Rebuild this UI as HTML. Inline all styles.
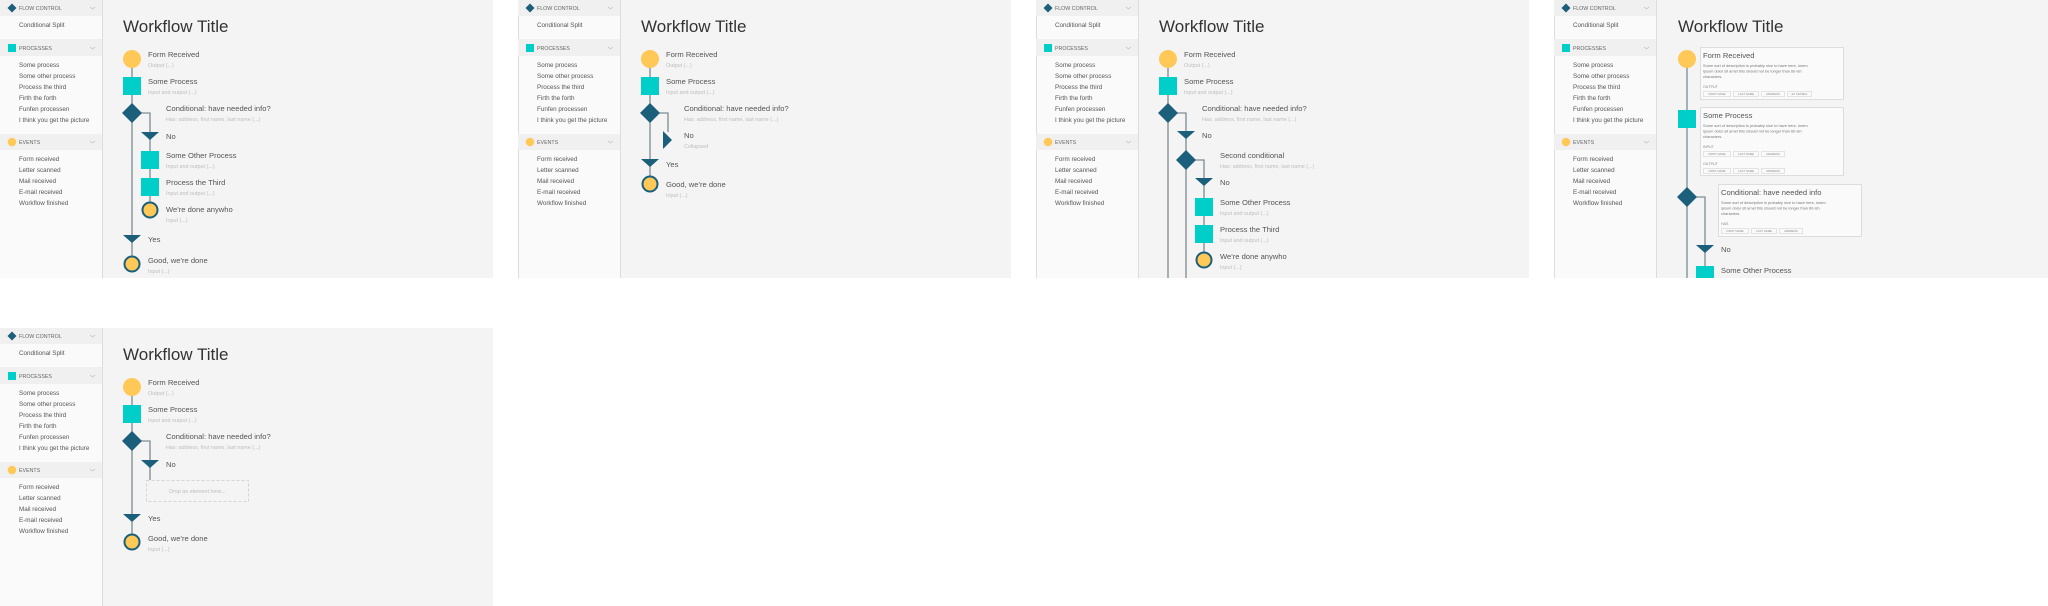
<!DOCTYPE html>
<html><head><meta charset="utf-8"><style>
html,body{margin:0;padding:0;background:#fff;width:2048px;height:606px;overflow:hidden}
svg{display:block;font-family:"Liberation Sans",sans-serif}
.hd{font-size:5.3px;fill:#666}
.it{font-size:6.3px;fill:#555}
.lb{font-size:7.6px;fill:#555}
.sb{font-size:5.4px;fill:#bdbdbd}
.tt{font-size:17px;fill:#333}
.ln{stroke:#7d8c91;stroke-width:1.3;fill:none}
.ds{font-size:3.9px;fill:#777}
.cap{font-size:3.6px;fill:#888}
.tg{font-size:2.8px;fill:#888}
.tr{fill:#fafafa;stroke:#ccc;stroke-width:0.5}
.cd{fill:#fafafa;stroke:#ddd;stroke-width:1}
</style></head><body>
<svg width="2048" height="606" viewBox="0 0 2048 606" xmlns="http://www.w3.org/2000/svg">
<defs><clipPath id="pc"><rect x="0" y="0" width="494" height="278"/></clipPath></defs>

<!-- ============ PANEL 1 ============ -->
<g transform="translate(0,0)" clip-path="url(#pc)">
<rect x="0" y="0" width="493" height="278" fill="#f4f4f4"/>
<rect x="0" y="0" width="102" height="278" fill="#fafafa"/><line x1="102.5" y1="0" x2="102.5" y2="278" stroke="#ddd"/>
<rect x="0" y="0" width="102" height="16" fill="#f0f0f0"/><rect x="0" y="39" width="102" height="17" fill="#f0f0f0"/><rect x="0" y="134" width="102" height="16" fill="#f0f0f0"/>
<polygon points="12,3.5 16.5,8 12,12.5 7.5,8" fill="#1c5f7a"/><rect x="8" y="44" width="8" height="8" fill="#00cec9"/><circle cx="12" cy="142" r="4.3" fill="#ffc857"/>
<polyline points="90,7 92.5,9 95,7" fill="none" stroke="#bbb" stroke-width="0.6"/><polyline points="90,47 92.5,49 95,47" fill="none" stroke="#bbb" stroke-width="0.6"/><polyline points="90,141 92.5,143 95,141" fill="none" stroke="#bbb" stroke-width="0.6"/>
<text class="hd" x="19" y="10">FLOW CONTROL</text><text class="it" x="19" y="27">Conditional Split</text>
<text class="hd" x="19" y="50">PROCESSES</text>
<text class="it" x="19" y="67">Some process</text><text class="it" x="19" y="78">Some other process</text><text class="it" x="19" y="89">Process the third</text><text class="it" x="19" y="100">Firth the forth</text><text class="it" x="19" y="111">Funfen processen</text><text class="it" x="19" y="122">I think you get the picture</text>
<text class="hd" x="19" y="144">EVENTS</text>
<text class="it" x="19" y="161">Form received</text><text class="it" x="19" y="172">Letter scanned</text><text class="it" x="19" y="183">Mail received</text><text class="it" x="19" y="194">E-mail received</text><text class="it" x="19" y="205">Workflow finished</text>
<text class="tt" x="123" y="32">Workflow Title</text>
<line class="ln" x1="132" y1="59" x2="132" y2="264"/><polyline class="ln" points="132,113 150,113 150,210"/>
<circle cx="132" cy="59" r="9" fill="#ffc857"/><text class="lb" x="148" y="57">Form Received</text><text class="sb" x="148" y="67">Output (...)</text>
<rect x="123" y="77" width="18" height="18" fill="#00cec9"/><text class="lb" x="148" y="84">Some Process</text><text class="sb" x="148" y="94">Input and output (...)</text>
<polygon points="132,103 142,113 132,123 122,113" fill="#1c5f7a"/><text class="lb" x="166" y="111">Conditional: have needed info?</text><text class="sb" x="166" y="121">Has: address, first name, last name (...)</text>
<polygon points="141,132 159,132 150,140" fill="#1c5f7a"/><text class="lb" x="166" y="139">No</text>
<rect x="141" y="151" width="18" height="18" fill="#00cec9"/><text class="lb" x="166" y="158">Some Other Process</text><text class="sb" x="166" y="168">Input and output (...)</text>
<rect x="141" y="178" width="18" height="18" fill="#00cec9"/><text class="lb" x="166" y="185">Process the Third</text><text class="sb" x="166" y="195">Input and output (...)</text>
<circle cx="150" cy="210" r="7.5" fill="#ffc857" stroke="#1c5f7a" stroke-width="2"/><text class="lb" x="166" y="212">We're done anywho</text><text class="sb" x="166" y="222">Input (...)</text>
<polygon points="123,235 141,235 132,243" fill="#1c5f7a"/><text class="lb" x="148" y="242">Yes</text>
<circle cx="132" cy="264" r="7.5" fill="#ffc857" stroke="#1c5f7a" stroke-width="2"/><text class="lb" x="148" y="263">Good, we're done</text><text class="sb" x="148" y="273">Input (...)</text>
</g>

<!-- ============ PANEL 2 ============ -->
<g transform="translate(518,0)" clip-path="url(#pc)">
<rect x="0" y="0" width="493" height="278" fill="#f4f4f4"/>
<rect x="0" y="0" width="102" height="278" fill="#fafafa"/><line x1="102.5" y1="0" x2="102.5" y2="278" stroke="#ddd"/><line x1="0.5" y1="0" x2="0.5" y2="278" stroke="#ddd"/>
<rect x="0" y="0" width="102" height="16" fill="#f0f0f0"/><rect x="0" y="39" width="102" height="17" fill="#f0f0f0"/><rect x="0" y="134" width="102" height="16" fill="#f0f0f0"/>
<polygon points="12,3.5 16.5,8 12,12.5 7.5,8" fill="#1c5f7a"/><rect x="8" y="44" width="8" height="8" fill="#00cec9"/><circle cx="12" cy="142" r="4.3" fill="#ffc857"/>
<polyline points="90,7 92.5,9 95,7" fill="none" stroke="#bbb" stroke-width="0.6"/><polyline points="90,47 92.5,49 95,47" fill="none" stroke="#bbb" stroke-width="0.6"/><polyline points="90,141 92.5,143 95,141" fill="none" stroke="#bbb" stroke-width="0.6"/>
<text class="hd" x="19" y="10">FLOW CONTROL</text><text class="it" x="19" y="27">Conditional Split</text>
<text class="hd" x="19" y="50">PROCESSES</text>
<text class="it" x="19" y="67">Some process</text><text class="it" x="19" y="78">Some other process</text><text class="it" x="19" y="89">Process the third</text><text class="it" x="19" y="100">Firth the forth</text><text class="it" x="19" y="111">Funfen processen</text><text class="it" x="19" y="122">I think you get the picture</text>
<text class="hd" x="19" y="144">EVENTS</text>
<text class="it" x="19" y="161">Form received</text><text class="it" x="19" y="172">Letter scanned</text><text class="it" x="19" y="183">Mail received</text><text class="it" x="19" y="194">E-mail received</text><text class="it" x="19" y="205">Workflow finished</text>
<text class="tt" x="123" y="32">Workflow Title</text>
<line class="ln" x1="132" y1="59" x2="132" y2="184"/><polyline class="ln" points="132,113 150,113 150,132"/>
<circle cx="132" cy="59" r="9" fill="#ffc857"/><text class="lb" x="148" y="57">Form Received</text><text class="sb" x="148" y="67">Output (...)</text>
<rect x="123" y="77" width="18" height="18" fill="#00cec9"/><text class="lb" x="148" y="84">Some Process</text><text class="sb" x="148" y="94">Input and output (...)</text>
<polygon points="132,103 142,113 132,123 122,113" fill="#1c5f7a"/><text class="lb" x="166" y="111">Conditional: have needed info?</text><text class="sb" x="166" y="121">Has: address, first name, last name (...)</text>
<polygon points="145,131 145,149 154,140" fill="#1c5f7a"/><text class="lb" x="166" y="138">No</text><text class="sb" x="166" y="148">Collapsed</text>
<polygon points="123,159 141,159 132,167" fill="#1c5f7a"/><text class="lb" x="148" y="167">Yes</text>
<circle cx="132" cy="184" r="7.5" fill="#ffc857" stroke="#1c5f7a" stroke-width="2"/><text class="lb" x="148" y="187">Good, we're done</text><text class="sb" x="148" y="197">Input (...)</text>
</g>

<!-- ============ PANEL 3 ============ -->
<g transform="translate(1036,0)" clip-path="url(#pc)">
<rect x="0" y="0" width="493" height="278" fill="#f4f4f4"/>
<rect x="0" y="0" width="102" height="278" fill="#fafafa"/><line x1="102.5" y1="0" x2="102.5" y2="278" stroke="#ddd"/><line x1="0.5" y1="0" x2="0.5" y2="278" stroke="#ddd"/>
<rect x="0" y="0" width="102" height="16" fill="#f0f0f0"/><rect x="0" y="39" width="102" height="17" fill="#f0f0f0"/><rect x="0" y="134" width="102" height="16" fill="#f0f0f0"/>
<polygon points="12,3.5 16.5,8 12,12.5 7.5,8" fill="#1c5f7a"/><rect x="8" y="44" width="8" height="8" fill="#00cec9"/><circle cx="12" cy="142" r="4.3" fill="#ffc857"/>
<polyline points="90,7 92.5,9 95,7" fill="none" stroke="#bbb" stroke-width="0.6"/><polyline points="90,47 92.5,49 95,47" fill="none" stroke="#bbb" stroke-width="0.6"/><polyline points="90,141 92.5,143 95,141" fill="none" stroke="#bbb" stroke-width="0.6"/>
<text class="hd" x="19" y="10">FLOW CONTROL</text><text class="it" x="19" y="27">Conditional Split</text>
<text class="hd" x="19" y="50">PROCESSES</text>
<text class="it" x="19" y="67">Some process</text><text class="it" x="19" y="78">Some other process</text><text class="it" x="19" y="89">Process the third</text><text class="it" x="19" y="100">Firth the forth</text><text class="it" x="19" y="111">Funfen processen</text><text class="it" x="19" y="122">I think you get the picture</text>
<text class="hd" x="19" y="144">EVENTS</text>
<text class="it" x="19" y="161">Form received</text><text class="it" x="19" y="172">Letter scanned</text><text class="it" x="19" y="183">Mail received</text><text class="it" x="19" y="194">E-mail received</text><text class="it" x="19" y="205">Workflow finished</text>
<text class="tt" x="123" y="32">Workflow Title</text>
<line class="ln" x1="132" y1="59" x2="132" y2="280"/><polyline class="ln" points="132,113 150,113 150,280"/><polyline class="ln" points="150,160 168,160 168,260"/>
<circle cx="132" cy="59" r="9" fill="#ffc857"/><text class="lb" x="148" y="57">Form Received</text><text class="sb" x="148" y="67">Output (...)</text>
<rect x="123" y="77" width="18" height="18" fill="#00cec9"/><text class="lb" x="148" y="84">Some Process</text><text class="sb" x="148" y="94">Input and output (...)</text>
<polygon points="132,103 142,113 132,123 122,113" fill="#1c5f7a"/><text class="lb" x="166" y="111">Conditional: have needed info?</text><text class="sb" x="166" y="121">Has: address, first name, last name (...)</text>
<polygon points="141,131 159,131 150,139" fill="#1c5f7a"/><text class="lb" x="166" y="138">No</text>
<polygon points="150,150 160,160 150,170 140,160" fill="#1c5f7a"/><text class="lb" x="184" y="158">Second conditional</text><text class="sb" x="184" y="168">Has: address, first name, last name (...)</text>
<polygon points="159,178 177,178 168,186" fill="#1c5f7a"/><text class="lb" x="184" y="185">No</text>
<rect x="159" y="198" width="18" height="18" fill="#00cec9"/><text class="lb" x="184" y="205">Some Other Process</text><text class="sb" x="184" y="215">Input and output (...)</text>
<rect x="159" y="225" width="18" height="18" fill="#00cec9"/><text class="lb" x="184" y="232">Process the Third</text><text class="sb" x="184" y="242">Input and output (...)</text>
<circle cx="168" cy="260" r="7.5" fill="#ffc857" stroke="#1c5f7a" stroke-width="2"/><text class="lb" x="184" y="259">We're done anywho</text><text class="sb" x="184" y="269">Input (...)</text>
</g>

<!-- ============ PANEL 4 ============ -->
<g transform="translate(1554,0)" clip-path="url(#pc)">
<rect x="0" y="0" width="494" height="278" fill="#f4f4f4"/>
<rect x="0" y="0" width="102" height="278" fill="#fafafa"/><line x1="102.5" y1="0" x2="102.5" y2="278" stroke="#ddd"/><line x1="0.5" y1="0" x2="0.5" y2="278" stroke="#ddd"/>
<rect x="0" y="0" width="102" height="16" fill="#f0f0f0"/><rect x="0" y="39" width="102" height="17" fill="#f0f0f0"/><rect x="0" y="134" width="102" height="16" fill="#f0f0f0"/>
<polygon points="12,3.5 16.5,8 12,12.5 7.5,8" fill="#1c5f7a"/><rect x="8" y="44" width="8" height="8" fill="#00cec9"/><circle cx="12" cy="142" r="4.3" fill="#ffc857"/>
<polyline points="90,7 92.5,9 95,7" fill="none" stroke="#bbb" stroke-width="0.6"/><polyline points="90,47 92.5,49 95,47" fill="none" stroke="#bbb" stroke-width="0.6"/><polyline points="90,141 92.5,143 95,141" fill="none" stroke="#bbb" stroke-width="0.6"/>
<text class="hd" x="19" y="10">FLOW CONTROL</text><text class="it" x="19" y="27">Conditional Split</text>
<text class="hd" x="19" y="50">PROCESSES</text>
<text class="it" x="19" y="67">Some process</text><text class="it" x="19" y="78">Some other process</text><text class="it" x="19" y="89">Process the third</text><text class="it" x="19" y="100">Firth the forth</text><text class="it" x="19" y="111">Funfen processen</text><text class="it" x="19" y="122">I think you get the picture</text>
<text class="hd" x="19" y="144">EVENTS</text>
<text class="it" x="19" y="161">Form received</text><text class="it" x="19" y="172">Letter scanned</text><text class="it" x="19" y="183">Mail received</text><text class="it" x="19" y="194">E-mail received</text><text class="it" x="19" y="205">Workflow finished</text>
<text class="tt" x="124" y="32">Workflow Title</text>
<line class="ln" x1="133" y1="59" x2="133" y2="280"/><polyline class="ln" points="133,197 151,197 151,280"/>
<circle cx="133" cy="59" r="9" fill="#ffc857"/>
<rect class="cd" x="146.5" y="47.5" width="143" height="52"/>
<text class="lb" x="149" y="58">Form Received</text>
<text class="ds" x="149" y="67">Some sort of description is probably nice to have here, lorem</text><text class="ds" x="149" y="72.5">ipsum dolor sit amet this should not be longer than 60-ish</text><text class="ds" x="149" y="78">characters.</text>
<text class="cap" x="149" y="88">OUTPUT</text>
<rect class="tr" x="149.5" y="91.5" width="27" height="5"/><text class="tg" x="163" y="95" text-anchor="middle">FIRST NAME</text>
<rect class="tr" x="179.5" y="91.5" width="25" height="5"/><text class="tg" x="192" y="95" text-anchor="middle">LAST NAME</text>
<rect class="tr" x="207.5" y="91.5" width="23" height="5"/><text class="tg" x="219" y="95" text-anchor="middle">ADDRESS</text>
<rect class="tr" x="233.5" y="91.5" width="24" height="5"/><text class="tg" x="245.5" y="95" text-anchor="middle">ET CETERA</text>
<rect x="124" y="110" width="18" height="18" fill="#00cec9"/>
<rect class="cd" x="146.5" y="107.5" width="143" height="68"/>
<text class="lb" x="149" y="118">Some Process</text>
<text class="ds" x="149" y="127">Some sort of description is probably nice to have here, lorem</text><text class="ds" x="149" y="132.5">ipsum dolor sit amet this should not be longer than 60-ish</text><text class="ds" x="149" y="138">characters.</text>
<text class="cap" x="149" y="148">INPUT</text>
<rect class="tr" x="149.5" y="151.5" width="27" height="5"/><text class="tg" x="163" y="155" text-anchor="middle">FIRST NAME</text>
<rect class="tr" x="179.5" y="151.5" width="25" height="5"/><text class="tg" x="192" y="155" text-anchor="middle">LAST NAME</text>
<rect class="tr" x="207.5" y="151.5" width="23" height="5"/><text class="tg" x="219" y="155" text-anchor="middle">ADDRESS</text>
<text class="cap" x="149" y="165">OUTPUT</text>
<rect class="tr" x="149.5" y="168.5" width="27" height="5"/><text class="tg" x="163" y="172" text-anchor="middle">FIRST NAME</text>
<rect class="tr" x="179.5" y="168.5" width="25" height="5"/><text class="tg" x="192" y="172" text-anchor="middle">LAST NAME</text>
<rect class="tr" x="207.5" y="168.5" width="23" height="5"/><text class="tg" x="219" y="172" text-anchor="middle">ADDRESS</text>
<polygon points="133,187 143,197 133,207 123,197" fill="#1c5f7a"/>
<rect class="cd" x="164.5" y="184.5" width="143" height="52"/>
<text class="lb" x="167" y="195">Conditional: have needed info</text>
<text class="ds" x="167" y="204">Some sort of description is probably nice to have here, lorem</text><text class="ds" x="167" y="209.5">ipsum dolor sit amet this should not be longer than 60-ish</text><text class="ds" x="167" y="215">characters.</text>
<text class="cap" x="167" y="225">HAS</text>
<rect class="tr" x="167.5" y="228.5" width="27" height="5"/><text class="tg" x="181" y="232" text-anchor="middle">FIRST NAME</text>
<rect class="tr" x="197.5" y="228.5" width="25" height="5"/><text class="tg" x="210" y="232" text-anchor="middle">LAST NAME</text>
<rect class="tr" x="225.5" y="228.5" width="23" height="5"/><text class="tg" x="237" y="232" text-anchor="middle">ADDRESS</text>
<polygon points="142,245 160,245 151,253" fill="#1c5f7a"/><text class="lb" x="167" y="252">No</text>
<rect x="142" y="266" width="18" height="18" fill="#00cec9"/><text class="lb" x="167" y="273">Some Other Process</text>
</g>

<!-- ============ PANEL 5 ============ -->
<g transform="translate(0,328)" clip-path="url(#pc)">
<rect x="0" y="0" width="493" height="278" fill="#f4f4f4"/>
<rect x="0" y="0" width="102" height="278" fill="#fafafa"/><line x1="102.5" y1="0" x2="102.5" y2="278" stroke="#ddd"/>
<rect x="0" y="0" width="102" height="16" fill="#f0f0f0"/><rect x="0" y="39" width="102" height="17" fill="#f0f0f0"/><rect x="0" y="134" width="102" height="16" fill="#f0f0f0"/>
<polygon points="12,3.5 16.5,8 12,12.5 7.5,8" fill="#1c5f7a"/><rect x="8" y="44" width="8" height="8" fill="#00cec9"/><circle cx="12" cy="142" r="4.3" fill="#ffc857"/>
<polyline points="90,7 92.5,9 95,7" fill="none" stroke="#bbb" stroke-width="0.6"/><polyline points="90,47 92.5,49 95,47" fill="none" stroke="#bbb" stroke-width="0.6"/><polyline points="90,141 92.5,143 95,141" fill="none" stroke="#bbb" stroke-width="0.6"/>
<text class="hd" x="19" y="10">FLOW CONTROL</text><text class="it" x="19" y="27">Conditional Split</text>
<text class="hd" x="19" y="50">PROCESSES</text>
<text class="it" x="19" y="67">Some process</text><text class="it" x="19" y="78">Some other process</text><text class="it" x="19" y="89">Process the third</text><text class="it" x="19" y="100">Firth the forth</text><text class="it" x="19" y="111">Funfen processen</text><text class="it" x="19" y="122">I think you get the picture</text>
<text class="hd" x="19" y="144">EVENTS</text>
<text class="it" x="19" y="161">Form received</text><text class="it" x="19" y="172">Letter scanned</text><text class="it" x="19" y="183">Mail received</text><text class="it" x="19" y="194">E-mail received</text><text class="it" x="19" y="205">Workflow finished</text>
<text class="tt" x="123" y="32">Workflow Title</text>
<line class="ln" x1="132" y1="59" x2="132" y2="214"/><polyline class="ln" points="132,113 150,113 150,152"/>
<circle cx="132" cy="59" r="9" fill="#ffc857"/><text class="lb" x="148" y="57">Form Received</text><text class="sb" x="148" y="67">Output (...)</text>
<rect x="123" y="77" width="18" height="18" fill="#00cec9"/><text class="lb" x="148" y="84">Some Process</text><text class="sb" x="148" y="94">Input and output (...)</text>
<polygon points="132,103 142,113 132,123 122,113" fill="#1c5f7a"/><text class="lb" x="166" y="111">Conditional: have needed info?</text><text class="sb" x="166" y="121">Has: address, first name, last name (...)</text>
<polygon points="141,132 159,132 150,140" fill="#1c5f7a"/><text class="lb" x="166" y="139">No</text>
<rect x="146.5" y="152.5" width="102" height="21" fill="none" stroke="#ccc" stroke-width="0.8" stroke-dasharray="3,2"/>
<text class="sb" x="197.5" y="165" text-anchor="middle">Drop an element here...</text>
<polygon points="123,186 141,186 132,194" fill="#1c5f7a"/><text class="lb" x="148" y="193">Yes</text>
<circle cx="132" cy="214" r="7.5" fill="#ffc857" stroke="#1c5f7a" stroke-width="2"/><text class="lb" x="148" y="213">Good, we're done</text><text class="sb" x="148" y="223">Input (...)</text>
</g>
</svg>
</body></html>
